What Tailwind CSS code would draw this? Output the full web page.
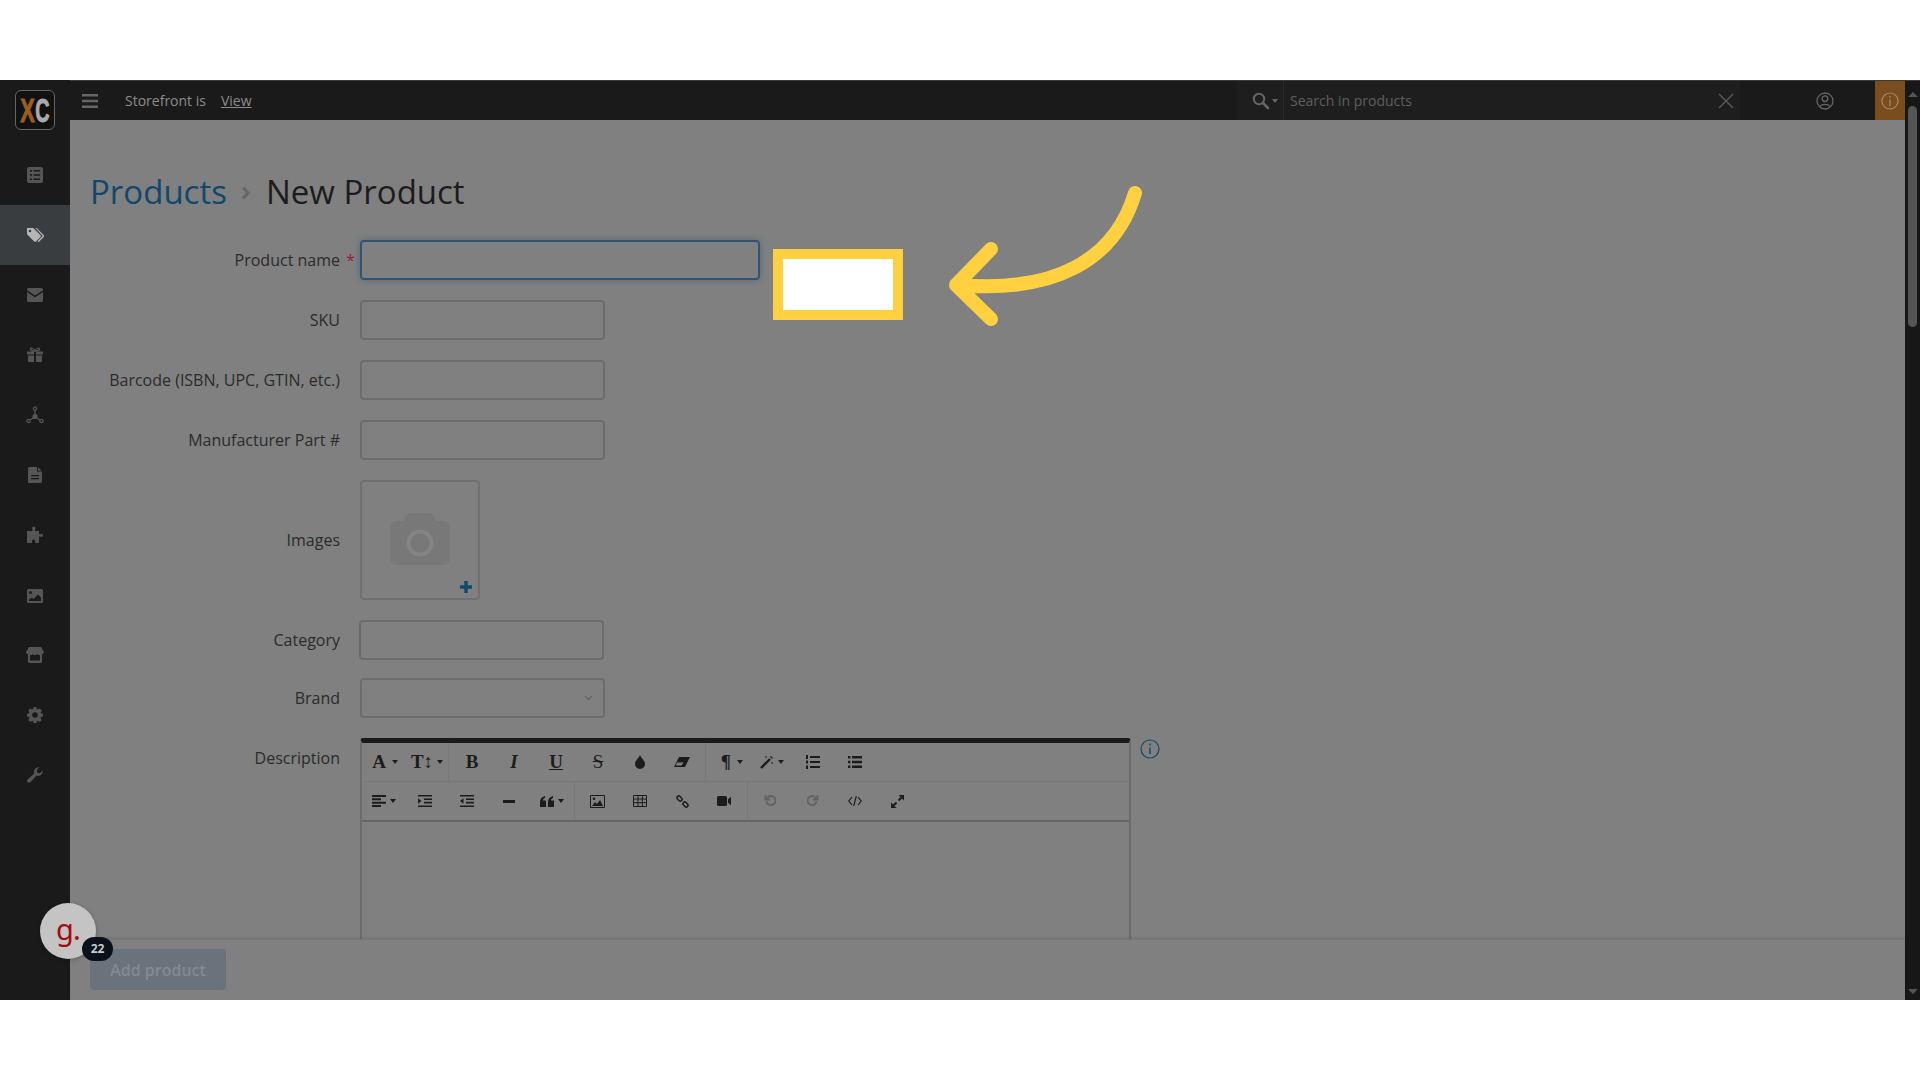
<!DOCTYPE html>
<html lang="en">
  <head>
    <meta charset="utf-8" />
    <title>New Product</title>
    <script src="https://cdn.jsdelivr.net/npm/@tailwindcss/browser@4"></script>
  </head>
  <body class="bg-white font-['Open_Sans',sans-serif]">
    <div class="h-[1080px] w-[1920px] overflow-hidden pt-20">
      <div class="relative flex h-[920px] overflow-hidden bg-[#808080]">
        <!-- Sidebar -->
        <aside class="flex w-[70px] shrink-0 flex-col bg-[#1a1a1a] text-[#555555]">
          <div class="flex h-[65px] items-start justify-center pt-[10px]">
            <div class="flex h-10 w-10 items-center justify-center overflow-hidden rounded-md border border-[#666666] bg-[#111111] font-['Liberation_Sans',sans-serif] text-[33px] leading-none font-bold [-webkit-text-stroke:1px_currentColor]">
              <span class="flex w-[15px] scale-x-[.66] justify-center text-[#9a5f1f]">X</span><span class="flex w-[15px] scale-x-[.6] justify-center text-[#aaaaaa]">C</span>
            </div>
          </div>
          <!-- list -->
          <div class="flex h-[60px] items-center justify-center">
            <svg class="h-[16px] w-[16px]" viewBox="0 0 16 16"><path fill="currentColor" fill-rule="evenodd" d="M2 0h12a2 2 0 0 1 2 2v12a2 2 0 0 1-2 2H2a2 2 0 0 1-2-2V2a2 2 0 0 1 2-2Zm1 3v1.6h2V3Zm3.500 0v1.600H13V3ZM3 7.200v1.600h2V7.200Zm3.500 0v1.600H13V7.200ZM3 11.400V13h2v-1.600Zm3.500 0V13H13v-1.600Z"/></svg>
          </div>
          <!-- tags, active -->
          <div class="flex h-[60px] items-center justify-center bg-[#3a3d40] pt-[2px] text-[#b5b5b5]">
            <svg class="h-[18px] w-[18px]" viewBox="0 0 18 18"><path fill="currentColor" fill-rule="evenodd" d="M1 1h6.200l7.300 7.300a1.300 1.300 0 0 1 0 1.800l-4.500 4.500a1.300 1.300 0 0 1-1.800 0L1 7.200Zm3 1.700a1.300 1.300 0 1 0 0 2.600 1.300 1.300 0 0 0 0-2.600Z"/><path fill="currentColor" d="M9.500 1h1.300l6.700 6.900a1.700 1.700 0 0 1 0 2.400l-4.900 5-1-1 4.600-4.800a.8.800 0 0 0 0-1Z"/></svg>
          </div>
          <!-- mail -->
          <div class="flex h-[60px] items-center justify-center">
            <svg class="h-[14px] w-[16px]" viewBox="0 0 16 14"><path fill="currentColor" d="M1.500 0h13A1.500 1.500 0 0 1 16 1.500v.7L8 7.500 0 2.200v-.7A1.500 1.500 0 0 1 1.500 0ZM0 4l8 5.300L16 4v8.500a1.500 1.500 0 0 1-1.500 1.500h-13A1.500 1.500 0 0 1 0 12.500Z"/></svg>
          </div>
          <!-- gift -->
          <div class="flex h-[60px] items-center justify-center">
            <svg class="h-[16px] w-[16px]" viewBox="0 0 16 16"><path fill="currentColor" d="M0 4.500h7v3H0Zm9 0h7v3H9ZM1 8.500h6V15H2a1 1 0 0 1-1-1Zm8 0h6V14a1 1 0 0 1-1 1H9Z"/><path fill="none" stroke="currentColor" stroke-width="1.300" d="M8 4.200C6.500 1 4 .4 3.500 1.600 3 3 5 4.200 8 4.200Zm0 0C9.500 1 12 .4 12.500 1.600 13 3 11 4.200 8 4.200Z"/></svg>
          </div>
          <!-- network -->
          <div class="flex h-[60px] items-center justify-center">
            <svg class="h-[18px] w-[18px]" viewBox="0 0 18 18"><g fill="none" stroke="currentColor" stroke-width="1.300"><circle cx="9" cy="2.500" r="1.600"/><circle cx="2.500" cy="15" r="1.600"/><circle cx="15.500" cy="15" r="1.600"/><path d="M9 4v6M3.800 14.200 8 11.500M14.200 14.200 10 11.500"/></g><circle cx="9" cy="10.500" r="2.600" fill="currentColor"/></svg>
          </div>
          <!-- file -->
          <div class="flex h-[60px] items-center justify-center">
            <svg class="h-[16px] w-[14px]" viewBox="0 0 14 16"><path fill="currentColor" fill-rule="evenodd" d="M1.500 0H9v4.500h5V14.500A1.500 1.500 0 0 1 12.500 16h-11A1.500 1.500 0 0 1 0 14.500v-13A1.500 1.500 0 0 1 1.500 0ZM3 8v1.300h8V8Zm0 3v1.300h8V11ZM10 .3 13.700 3.500H10Z"/></svg>
          </div>
          <!-- puzzle -->
          <div class="flex h-[60px] items-center justify-center pl-[2px]">
            <svg class="h-[18px] w-[18px]" viewBox="0 0 18 18"><path fill="currentColor" d="M0 5h5.500V3.400a1.700 1.700 0 1 1 2.500 0V5h4v3.200h1.300a1.600 1.600 0 1 1 0 2.400H12V17H8.200v-2a1.600 1.600 0 0 0-3.200 0v2H0Z"/></svg>
          </div>
          <!-- image -->
          <div class="flex h-[60px] items-center justify-center pt-[2px]">
            <svg class="h-[14px] w-[16px]" viewBox="0 0 16 14"><path fill="currentColor" fill-rule="evenodd" d="M1.500 0h13A1.500 1.500 0 0 1 16 1.500v11a1.500 1.500 0 0 1-1.500 1.500h-13A1.500 1.500 0 0 1 0 12.500v-11A1.500 1.500 0 0 1 1.500 0ZM3.500 2a1.500 1.500 0 1 0 0 3 1.500 1.500 0 0 0 0-3ZM2 12h12V8.500l-3-3-4.500 4.500L5 8.500l-3 2Z"/></svg>
          </div>
          <!-- store -->
          <div class="flex h-[60px] items-center justify-center">
            <svg class="h-[16px] w-[18px]" viewBox="0 0 18 16"><path fill="currentColor" fill-rule="evenodd" d="M3 0h12l3 5a2.200 2.200 0 0 1-2 2.200V14.500a1.500 1.500 0 0 1-1.500 1.500h-11A1.500 1.500 0 0 1 2 14.500V7.200A2.200 2.200 0 0 1 0 5Zm1 8v5.500h10V8a3 3 0 0 1-2.500-.8A3.500 3.500 0 0 1 9 8a3.500 3.500 0 0 1-2.500-.8A3 3 0 0 1 4 8Z"/></svg>
          </div>
          <!-- gear -->
          <div class="flex h-[60px] items-center justify-center">
            <svg class="h-[16px] w-[16px]" viewBox="0 0 16 16"><path fill="currentColor" fill-rule="evenodd" d="M6.600 0h2.800l.4 2.100 1.200.5L12.800 1.400l2 2-1.200 1.800.5 1.200 1.900.4v2.800l-2 .4-.5 1.200 1.200 1.700-2 2-1.700-1.200-1.200.5-.4 2.100H6.600l-.4-2.100-1.200-.5-1.800 1.200-2-2 1.200-1.700-.5-1.200L0 9.600V6.800l1.900-.4.5-1.200L1.200 3.400l2-2L5 2.600l1.200-.5ZM8 5.200a2.800 2.800 0 1 0 0 5.600 2.800 2.800 0 0 0 0-5.600Z"/></svg>
          </div>
          <!-- wrench -->
          <div class="flex h-[60px] items-center justify-center">
            <svg class="h-[16px] w-[16px]" viewBox="0 0 16 16"><path fill="currentColor" d="M15.800 3.500a4.700 4.700 0 0 1-6.300 5.100L3.300 15.300a2 2 0 0 1-2.800-2.800L7.300 6.400A4.700 4.700 0 0 1 12.500.2L9.800 3l.5 2.700 2.700.5Z"/></svg>
          </div>
        </aside>

        <div class="flex min-w-0 flex-1 flex-col">
          <!-- Top bar -->
          <header class="flex h-10 shrink-0 items-center border-t border-[#3a3a3a] bg-[#1a1a1a] text-sm text-[#8c8c8c]">
            <svg class="ml-3 h-[14px] w-4" viewBox="0 0 16 14"><path fill="#666666" d="M0 0h16v2.600H0Zm0 5.700h16v2.600H0Zm0 5.700h16V14H0Z"/></svg>
            <span class="ml-[27px]">Storefront is</span>
            <span class="ml-[15px] underline">View</span>
            <div class="ml-auto flex h-full w-[503px] items-center bg-[#1e1e1e] text-[#5f5f5f]">
              <svg class="ml-[15px] h-[18px] w-[18px]" viewBox="0 0 18 18"><circle cx="7" cy="7" r="5.200" fill="none" stroke="#666666" stroke-width="2"/><path stroke="#666666" stroke-width="2.600" stroke-linecap="round" d="m11 11 5 5"/></svg>
              <span class="ml-[2px] h-0 w-0 border-x-[3.500px] border-t-4 border-x-transparent border-t-[#666666]"></span>
              <span class="ml-[5px] h-full w-px bg-[#2a2a2a]"></span>
              <span class="ml-[6px]">Search in products</span>
              <svg class="mr-[6px] ml-auto h-[16px] w-[16px]" viewBox="0 0 16 16"><path stroke="#5c5c5c" stroke-width="1.300" d="m1 1 14 14M15 1 1 15"/></svg>
            </div>
            <svg class="ml-[76px] h-[18px] w-[18px]" viewBox="0 0 18 18"><g fill="none" stroke="#666666" stroke-width="1.300"><circle cx="9" cy="9" r="8"/><circle cx="9" cy="6.700" r="2.800"/><path d="M3.800 14.800C5 11.500 13 11.500 14.200 14.800"/></g></svg>
            <div class="ml-[41px] flex h-full w-[30px] items-center justify-center bg-[#7a4d1c]">
              <svg class="h-[18px] w-[18px]" viewBox="0 0 18 18"><circle cx="9" cy="9" r="8" fill="none" stroke="#a08a70" stroke-width="1.200"/><path stroke="#a08a70" stroke-width="1.300" d="M9 7.500V14M9 4v1.600"/></svg>
            </div>
            <div class="h-full w-[15px] shrink-0"></div>
          </header>

          <!-- Page -->
          <main class="pt-[42px] pl-5 text-base text-[#2b2b2b]">
            <h1 class="flex h-[58px] items-center text-[33px] leading-none font-medium">
              <span class="text-[#12486b]">Products</span>
              <svg class="mt-[4px] mr-[15px] ml-[14px] h-[14px] w-[10px]" viewBox="0 0 10 14"><path fill="none" stroke="#666666" stroke-width="3" d="m2 1.500 5 5.500-5 5.500"/></svg>
              <span class="text-[#1c1c1c]">New Product</span>
            </h1>

            <form class="mt-5 flex flex-col gap-5">
              <div class="flex h-10 items-center">
                <label class="w-[250px] shrink-0 text-right">Product name</label>
                <span class="w-5 pl-[6px] text-[#8a2040]">*</span>
                <div class="h-10 w-[400px] rounded-[4px] border-2 border-[#2e5672] shadow-[0_0_6px_rgba(30,70,100,.45)]"></div>
              </div>
              <div class="flex h-10 items-center">
                <label class="mr-5 w-[250px] shrink-0 text-right">SKU</label>
                <div class="h-10 w-[245px] rounded-[4px] border-2 border-[#6c6c6c]"></div>
              </div>
              <div class="flex h-10 items-center">
                <label class="mr-5 w-[250px] shrink-0 text-right">Barcode (ISBN, UPC, GTIN, etc.)</label>
                <div class="h-10 w-[245px] rounded-[4px] border-2 border-[#6c6c6c]"></div>
              </div>
              <div class="flex h-10 items-center">
                <label class="mr-5 w-[250px] shrink-0 text-right">Manufacturer Part #</label>
                <div class="h-10 w-[245px] rounded-[4px] border-2 border-[#6c6c6c]"></div>
              </div>
              <div class="flex h-[120px] items-center">
                <label class="mr-5 w-[250px] shrink-0 text-right">Images</label>
                <div class="relative flex h-[120px] w-[120px] items-center justify-center rounded-[4px] border-2 border-[#707070]">
                  <svg class="-mt-[3px] h-[52px] w-[60px]" viewBox="0 0 60 52"><path fill="#787878" fill-rule="evenodd" d="M6 8h9V6a6 6 0 0 1 6-6h18a6 6 0 0 1 6 6v2h9a6 6 0 0 1 6 6v32a6 6 0 0 1-6 6H6a6 6 0 0 1-6-6V14a6 6 0 0 1 6-6Z"/><circle cx="30" cy="30" r="11.500" fill="none" stroke="#858585" stroke-width="4"/></svg>
                  <svg class="absolute right-[6px] bottom-[5px] h-[12px] w-[12px]" viewBox="0 0 12 12"><path fill="#12486b" d="M4.300 0h3.400v4.300H12v3.400H7.700V12H4.300V7.700H0V4.300h4.300Z"/></svg>
                </div>
              </div>
              <div class="flex h-10 items-center">
                <label class="mr-[19px] w-[250px] shrink-0 text-right">Category</label>
                <div class="h-10 w-[245px] rounded-[4px] border-2 border-[#6c6c6c]"></div>
              </div>
              <div class="-mt-[2px] flex h-10 items-center">
                <label class="mr-5 w-[250px] shrink-0 text-right">Brand</label>
                <div class="flex h-10 w-[245px] items-center justify-end rounded-[4px] border-2 border-[#6c6c6c] pr-[10px]">
                  <svg class="h-[6px] w-[9px]" viewBox="0 0 9 6"><path fill="none" stroke="#636363" stroke-width="1.200" d="m1 1 3.500 3.500L8 1"/></svg>
                </div>
              </div>
              <div class="flex items-start">
                <label class="mr-5 w-[250px] shrink-0 pt-[8px] text-right">Description</label>
                <div class="h-[260px] w-[771px] shrink-0 rounded-t-[3px] border-x-2 border-t-[5px] border-x-[#6c6c6c] border-t-[#1a1a1a] text-[#1c1c1c]">
                  <!-- toolbar row one -->
                  <div class="mx-[2px] flex h-[39px] items-center border-b border-[#787878] font-['Liberation_Serif',serif] text-[19px]">
                    <div class="flex w-[42px] items-center justify-center gap-[6px] font-bold">A<span class="h-0 w-0 border-x-[3.500px] border-t-4 border-x-transparent border-t-[#1c1c1c]"></span></div>
                    <div class="flex w-[42px] items-center justify-center gap-[4px] font-bold">T↕<span class="h-0 w-0 border-x-[3.500px] border-t-4 border-x-transparent border-t-[#1c1c1c]"></span></div>
                    <div class="mr-[2px] h-full w-px bg-[#787878]"></div>
                    <div class="w-[42px] text-center font-bold">B</div>
                    <div class="w-[42px] text-center font-bold italic">I</div>
                    <div class="w-[42px] text-center font-bold underline">U</div>
                    <div class="w-[42px] text-center line-through">S</div>
                    <div class="flex w-[42px] justify-center">
                      <svg class="h-[14px] w-[10px]" viewBox="0 0 10 14"><path fill="#1c1c1c" d="M5 0c1 3 5 5.500 5 9a5 5 0 0 1-10 0C0 5.500 4 3 5 0Z"/></svg>
                    </div>
                    <div class="flex w-[42px] justify-center">
                      <svg class="h-[12px] w-[16px]" viewBox="0 0 16 12"><path fill="#1c1c1c" d="M5 1h11L11 11H0Z"/><path fill="#808080" d="M3 6.500h6.500l-2 3H1.700Z"/></svg>
                    </div>
                    <div class="ml-[2px] h-full w-px bg-[#787878]"></div>
                    <div class="flex w-[52px] items-center justify-center gap-[6px] font-bold">¶<span class="h-0 w-0 border-x-[3.500px] border-t-4 border-x-transparent border-t-[#1c1c1c]"></span></div>
                    <div class="-ml-[6px] flex w-[40px] items-center justify-center gap-[4px]">
                      <svg class="h-[14px] w-[14px]" viewBox="0 0 14 14"><path stroke="#1c1c1c" stroke-width="2.400" d="M1 13 10 4"/><path stroke="#1c1c1c" d="M11 1v2M13 3h-2M6 1v2M12 7v2"/></svg>
                      <span class="h-0 w-0 border-x-[3.500px] border-t-4 border-x-transparent border-t-[#1c1c1c]"></span>
                    </div>
                    <div class="flex w-[42px] justify-center">
                      <svg class="h-[14px] w-[14px]" viewBox="0 0 14 14"><path fill="#1c1c1c" d="M4 1h10v2H4Zm0 5h10v2H4Zm0 5h10v2H4ZM0 0h2v4H0Zm0 5.500h2v3H0Zm0 5h2V14H0Z"/></svg>
                    </div>
                    <div class="flex w-[42px] justify-center">
                      <svg class="h-[12px] w-[14px]" viewBox="0 0 14 12"><path fill="#1c1c1c" d="M4 0h10v2.400H4Zm0 4.800h10v2.400H4Zm0 4.800h10V12H4ZM0 0h2.400v2.400H0Zm0 4.800h2.400v2.400H0Zm0 4.800h2.400V12H0Z"/></svg>
                    </div>
                  </div>
                  <!-- toolbar row two -->
                  <div class="mx-[2px] flex h-[38px] items-center">
                    <div class="flex w-[40px] items-center justify-center gap-[4px]">
                      <svg class="h-[12px] w-[14px]" viewBox="0 0 14 12"><path fill="#1c1c1c" d="M0 0h14v2H0Zm0 3.300h9v2H0Zm0 3.400h14v2H0ZM0 10h9v2H0Z"/></svg>
                      <span class="h-0 w-0 border-x-[3.500px] border-t-4 border-x-transparent border-t-[#1c1c1c]"></span>
                    </div>
                    <div class="flex w-[42px] justify-center">
                      <svg class="h-[12px] w-[14px]" viewBox="0 0 14 12"><path fill="#1c1c1c" d="M0 0h14v1.600H0Zm6 3.400h8V5H6Zm0 3.400h8v1.600H6ZM0 10.400h14V12H0ZM0 3.200 3.500 6 0 8.800Z"/></svg>
                    </div>
                    <div class="flex w-[42px] justify-center">
                      <svg class="h-[12px] w-[14px]" viewBox="0 0 14 12"><path fill="#1c1c1c" d="M0 0h14v1.600H0Zm6 3.400h8V5H6Zm0 3.400h8v1.600H6ZM0 10.400h14V12H0ZM3.500 3.200 0 6l3.500 2.800Z"/></svg>
                    </div>
                    <div class="flex w-[42px] justify-center">
                      <svg class="h-[3px] w-[12px]" viewBox="0 0 12 3"><path fill="#1c1c1c" d="M0 0h12v3H0Z"/></svg>
                    </div>
                    <div class="flex w-[44px] items-center justify-center gap-[4px]">
                      <svg class="h-[11px] w-[14px]" viewBox="0 0 14 11"><path fill="#1c1c1c" d="M0 6c0-3 1.500-5 5-6v2C3.500 2.500 3 3.300 3 4.500h3V11H0Zm8 0c0-3 1.500-5 5-6v2c-1.500.5-2 1.300-2 2.500h3V11H8Z"/></svg>
                      <span class="h-0 w-0 border-x-[3.500px] border-t-4 border-x-transparent border-t-[#1c1c1c]"></span>
                    </div>
                    <div class="h-full w-px bg-[#787878]"></div>
                    <div class="flex w-[44px] justify-center">
                      <svg class="h-[13px] w-[15px]" viewBox="0 0 15 13"><path fill="none" stroke="#1c1c1c" d="M.5.500h14v12H.5Z"/><path fill="#1c1c1c" d="m2 11 3-4 2 2 3-4 3 6Z"/><circle cx="4" cy="3.800" r="1.300" fill="#1c1c1c"/></svg>
                    </div>
                    <div class="flex w-[42px] justify-center">
                      <svg class="h-[12px] w-[14px]" viewBox="0 0 14 12"><path fill="none" stroke="#1c1c1c" d="M.5.500h13v11H.5Zm0 3.500h13M.5 7.700h13M5 .5v11M9.300.5v11"/></svg>
                    </div>
                    <div class="flex w-[42px] justify-center">
                      <svg class="h-[13px] w-[13px]" viewBox="0 0 13 13"><g fill="none" stroke="#1c1c1c" stroke-width="1.500"><rect x="-2.800" y="-1.800" width="5.600" height="3.600" rx="1.800" transform="translate(3.500 3.500) rotate(45)"/><rect x="-2.800" y="-1.800" width="5.600" height="3.600" rx="1.800" transform="translate(9.500 9.500) rotate(45)"/></g></svg>
                    </div>
                    <div class="mr-[2px] flex w-[42px] justify-center">
                      <svg class="h-[10px] w-[14px]" viewBox="0 0 14 10"><path fill="#1c1c1c" d="M1.500 0h7A1.500 1.500 0 0 1 10 1.500v7A1.500 1.500 0 0 1 8.500 10h-7A1.500 1.500 0 0 1 0 8.500v-7A1.500 1.500 0 0 1 1.500 0ZM14 .8v8.400l-3-2.500V3.300Z"/></svg>
                    </div>
                    <div class="h-full w-px bg-[#787878]"></div>
                    <div class="flex w-[44px] justify-center">
                      <svg class="h-[12px] w-[12px]" viewBox="0 0 12 12"><path fill="none" stroke="#636363" stroke-width="2" d="M2.500 6.500A4.500 4.500 0 1 0 4 2.200L2 4M1.500 0v4.500H6"/></svg>
                    </div>
                    <div class="flex w-[42px] justify-center">
                      <svg class="h-[12px] w-[12px]" viewBox="0 0 12 12"><path fill="none" stroke="#636363" stroke-width="2" d="M9.500 6.500A4.500 4.500 0 1 1 8 2.200L10 4M10.500 0v4.500H6"/></svg>
                    </div>
                    <div class="flex w-[42px] justify-center">
                      <svg class="h-[10px] w-[14px]" viewBox="0 0 14 10"><path fill="none" stroke="#1c1c1c" stroke-width="1.200" d="M4 1 .8 5 4 9M10 1l3.200 4L10 9M8.300 0 5.700 10"/></svg>
                    </div>
                    <div class="flex w-[42px] justify-center">
                      <svg class="h-[13px] w-[13px]" viewBox="0 0 13 13"><path fill="#1c1c1c" d="M7.500 0H13v5.500L11 3.500 8.200 6.200 6.800 4.800 9.500 2ZM5.500 13H0V7.500L2 9.500l2.800-2.700 1.400 1.400L3.500 11Z"/></svg>
                    </div>
                  </div>
                  <div class="h-[2px] bg-[#666666]"></div>
                </div>
                <svg class="mt-[1px] ml-[9px] h-5 w-5" viewBox="0 0 20 20"><circle cx="10" cy="10" r="9" fill="none" stroke="#12486b" stroke-width="1.200"/><path stroke="#12486b" stroke-width="1.400" d="M10 8.500V15M10 4.500v2"/></svg>
              </div>
            </form>
          </main>
        </div>

        <!-- Scrollbar -->
        <div class="absolute top-[1px] right-0 bottom-0 flex w-[15px] flex-col items-center bg-[#171717]">
          <span class="mt-[11px] h-0 w-0 border-x-[5px] border-b-[5px] border-x-transparent border-b-[#555555]"></span>
          <span class="mt-[9px] h-[221px] w-[9px] rounded-[5px] bg-[#555555]"></span>
          <span class="mt-auto mb-[6px] h-0 w-0 border-x-[5px] border-t-[5px] border-x-transparent border-t-[#555555]"></span>
        </div>

        <!-- Sticky footer -->
        <div class="absolute right-[15px] bottom-0 left-[70px] h-[61px] border-t border-[#777777] bg-[#808080] pt-[9px] pl-5 shadow-[0_-1px_3px_rgba(0,0,0,.15)]">
          <div class="flex h-[41px] w-[136px] items-center justify-center rounded-[4px] bg-[#6a737b] text-base font-semibold text-[#808b94]">Add product</div>
        </div>

        <!-- Help widget -->
        <div class="absolute top-[823px] left-10 flex h-[56px] w-[56px] items-center justify-center rounded-full bg-[#c4c4c4] font-['Noto_Sans',sans-serif] text-[29px] leading-none text-[#a50b0b] shadow-[0_1px_4px_rgba(0,0,0,.25)]">
          <span class="-mt-[6px] tracking-tight">g.</span>
        </div>
        <div class="absolute top-[857px] left-[82px] flex h-6 w-[31px] items-center justify-center rounded-full bg-[#0b111b] text-xs font-bold text-[#cccccc]">22</div>

        <!-- Annotation -->
        <div class="absolute top-[169px] left-[773px] h-[71px] w-[130px] border-[10px] border-[#ffd040] bg-white"></div>
        <svg class="absolute top-0 left-0 h-[920px] w-[1920px]" viewBox="0 80 1920 920" fill="none">
          <path stroke="#ffd040" stroke-width="14" stroke-linecap="round" stroke-linejoin="round" d="M1135 193C1115 260 1055 293 960 285M991 249 956 285 991 319"/>
        </svg>
      </div>
    </div>
  </body>
</html>
